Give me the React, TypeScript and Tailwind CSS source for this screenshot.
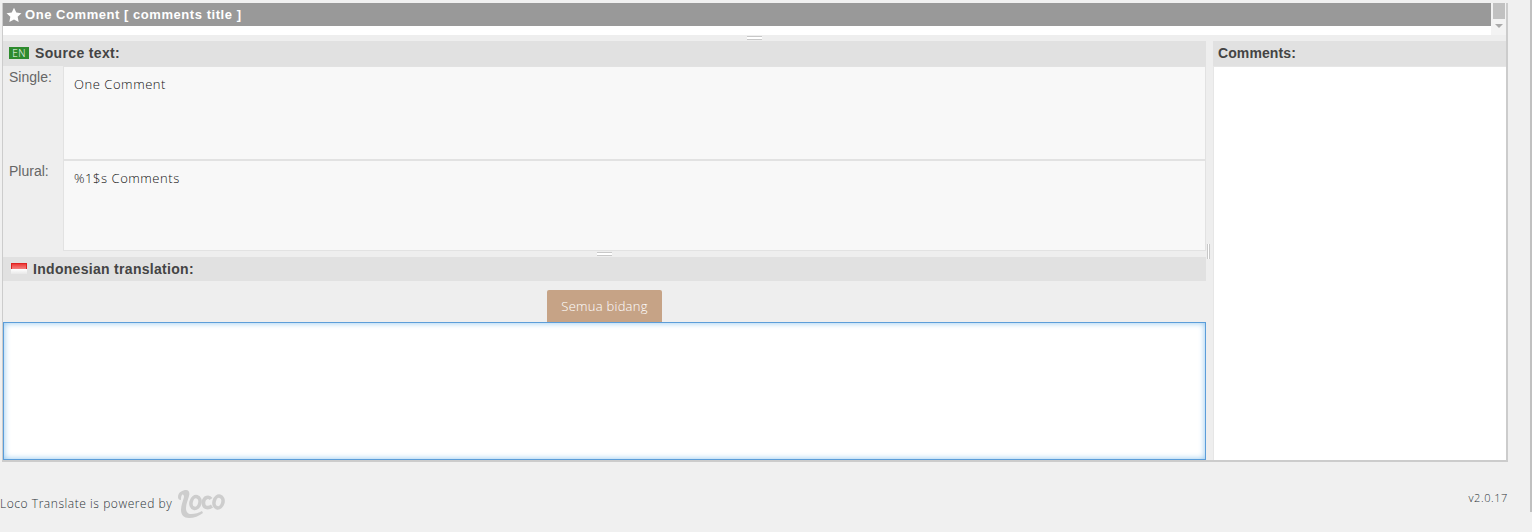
const sans = "font-['Open_Sans',sans-serif] font-light";
const bold = "font-['Liberation_Sans',sans-serif] font-bold";

function Grip({vertical}: {vertical?: boolean}) {
  return vertical ? (
    <div className="h-[15px] w-[3px] border-x border-[#c8c8c8] bg-white" />
  ) : (
    <div className="h-[4px] w-[15px] border-y border-[#c8c8c8] bg-white" />
  );
}

function Heading({children, className}: {children: React.ReactNode; className?: string}) {
  return (
    <div className={`flex items-center bg-[#e1e1e1] pb-[1px] text-[14px] leading-none text-[#444] ${bold} ${className}`}>
      {children}
    </div>
  );
}

function SourceRow({label, text, height}: {label: string; text: string; height: string}) {
  return (
    <div className={`flex ${height}`}>
      <div className="w-[60px] shrink-0 pl-[6px] pt-[2px] text-[14px] leading-[18px] text-[#666] font-['Liberation_Sans',sans-serif]">
        {label}
      </div>
      <div className={`flex-1 border border-[#e2e2e2] bg-[#f8f8f8] pl-[10px] pt-[8px] text-[13px] leading-[18px] tracking-[0.55px] text-[#111] ${sans}`}>
        {text}
      </div>
    </div>
  );
}

function LocoLogo() {
  return (
    <svg width="50" height="28" viewBox="0 0 50 28" className="ml-[5px]">
      <path
        d="M1 7 C1 2 6 0 9 0 C12 0 13 3 12 6 C11 10 9 14 9 18 C9 22 11 24 14 24 C18 24 22 23 25 21 L26 23 C22 26 17 28 12 28 C7 28 4 25 4 20 C4 15 6 11 7 7 C7 5 6 4 5 5 C4 6 4 8 4 10 C2 10 1 9 1 7 Z"
        fill="#cdcdcd"
      />
      <g fill="none" stroke="#cdcdcd" strokeWidth="3.6">
        <ellipse cx="18.5" cy="12.5" rx="4.4" ry="6" transform="rotate(15 18.5 12.5)" />
        <path d="M34 9 C32 6 27 7 26.5 12 C26 18 31 19 35 16" />
        <ellipse cx="41.5" cy="12" rx="4.4" ry="6" transform="rotate(15 41.5 12)" />
      </g>
    </svg>
  );
}

export default function App() {
  return (
    <div className={`relative flex h-[532px] w-[1532px] flex-col overflow-hidden bg-[#f0f0f0] pt-[3px] ${sans}`}>
      <div className="ml-[2px] mr-[24px] flex h-[459px] flex-col border-b-2 border-l border-r-2 border-[#ccc] bg-[#eee]">
        <div className="flex h-[32px] shrink-0 bg-white">
          <div className="flex-1">
            <div className={`flex h-[23px] items-center gap-[3px] bg-[#999] pl-[3px] text-[13px] tracking-[0.55px] text-white ${bold}`}>
              <svg width="16" height="16" viewBox="0 0 24 24" fill="#fff">
                <path d="M12 1l3.4 7.2 7.8 1-5.7 5.4 1.5 7.8-7-3.8-7 3.8 1.5-7.8L.8 9.200l7.800-1z" />
              </svg>
              One Comment [ comments title ]
            </div>
          </div>
          <div className="flex w-[15px] flex-col items-center bg-[#f3f3f3]">
            <div className="h-[16px] w-[12px] bg-[#c1c1c1]" />
            <div className="mt-[5px] h-0 w-0 border-x-[4px] border-t-[4px] border-x-transparent border-t-[#aaa]" />
          </div>
        </div>
        <div className="flex h-[6px] shrink-0 items-center justify-center">
          <Grip />
        </div>
        <div className="flex min-h-0 flex-1">
          <div className="flex w-[1203px] shrink-0 flex-col">
            <Heading className="h-[25px] gap-[6px] pl-[6px]">
              <span className={`flex h-[12px] w-[20px] items-center justify-center bg-[#2e8b2e] text-[10px] tracking-[0.5px] text-white ${sans}`}>
                EN
              </span>
              <span className="tracking-[0.35px]">Source text:</span>
            </Heading>
            <SourceRow label="Single:" text="One Comment" height="h-[94px]" />
            <SourceRow label="Plural:" text="%1$s Comments" height="h-[91px]" />
            <div className="flex h-[6px] shrink-0 items-center justify-center">
              <Grip />
            </div>
            <Heading className="h-[24px] gap-[6px] pl-[8px]">
              <span className="flex h-[11px] w-[16px] flex-col overflow-hidden">
                <span className="h-[6px] border border-b-0 border-[#d22] bg-gradient-to-b from-[#ee3333] to-[#f08080]" />
                <span className="h-[5px] bg-gradient-to-b from-white to-[#e8e8e8]" />
              </span>
              <span className="tracking-[0.3px]">Indonesian translation:</span>
            </Heading>
            <div className="flex flex-1 flex-col">
              <div className="flex justify-center pt-[9px]">
                <div className={`flex h-[32px] w-[115px] items-center justify-center rounded-t-[2px] bg-[#c6a386] pt-[1px] text-[13px] tracking-[0.25px] text-white ${sans}`}>
                  Semua bidang
                </div>
              </div>
              <div className="flex-1 border border-[#5b9dd9] bg-white shadow-[inset_0_0_6px_#8cc4ee]" />
            </div>
          </div>
          <div className="relative w-[7px] shrink-0">
            <div className="absolute left-[1px] top-[203px]">
              <Grip vertical />
            </div>
          </div>
          <div className="flex flex-1 flex-col">
            <Heading className="h-[25px] pl-[5px] tracking-[0.1px]">Comments:</Heading>
            <div className="flex-1 border-l border-t border-[#e6e6e6] bg-white" />
          </div>
        </div>
      </div>
      <div className="mr-[24px] mt-[28px] flex items-start justify-between">
        <div className="flex items-center text-[12px] tracking-[0.55px] text-[#2c3338]">
          Loco Translate is powered by
          <LocoLogo />
        </div>
        <div className="text-[11px] leading-[16px] tracking-[0.6px] text-[#2c3338]">v2.0.17</div>
      </div>
      <div className="absolute right-0 top-0 h-[512px] w-[2px] bg-[#c0c0c0]" />
    </div>
  );
}
